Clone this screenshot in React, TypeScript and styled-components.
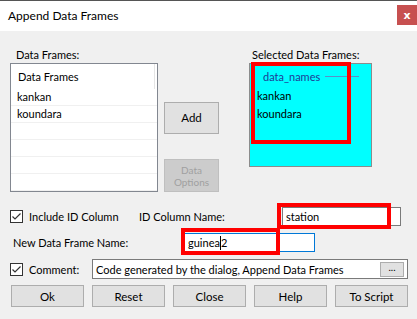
import React, { FC } from "react";
import styled, { createGlobalStyle } from "styled-components";

const GlobalStyle = createGlobalStyle`
  html, body {
    margin: 0;
    padding: 0;
    background: #f0f0f0;
  }
  body {
    font-family: "Segoe UI", Lato, "Noto Sans", sans-serif;
    font-size: 11px;
    color: #000;
  }
`;

const listRows = ["kankan", "koundara", "", "", "", ""];
const bottomButtons = ["Ok", "Reset", "Close", "Help", "To Script"];

const Check: FC<{ checked?: boolean }> = ({ checked }) => (
  <CheckBox>
    {checked && (
      <svg width="11" height="11" viewBox="0 0 11 11">
        <path d="M1.5 5.5 L4 8 L9.5 2.5" fill="none" stroke="#333" strokeWidth="1.2" />
      </svg>
    )}
  </CheckBox>
);

export default function App() {
  return (
    <>
      <GlobalStyle />
      <Window>
        <TitleBar>
          <Title>Append Data Frames</Title>
          <CloseButton>x</CloseButton>
        </TitleBar>
        <Body>
          <TopSection>
            <Column>
              <FieldLabel $indent={6}>Data Frames:</FieldLabel>
              <ListBox>
                <ListHeader>Data Frames</ListHeader>
                {listRows.map((row, i) => (
                  <ListRow key={i}>{row}</ListRow>
                ))}
              </ListBox>
            </Column>
            <MiddleColumn>
              <SideButton>Add</SideButton>
              <SideButton disabled $tall>
                Data
                <br />
                Options
              </SideButton>
            </MiddleColumn>
            <Column>
              <FieldLabel $indent={3}>Selected Data Frames:</FieldLabel>
              <SelectedBox>
                <GroupHeader>
                  <span>data_names</span>
                  <GroupLine />
                </GroupHeader>
                <SelectedItem>kankan</SelectedItem>
                <SelectedItem>koundara</SelectedItem>
                <Highlight $top={-2} $left={1} $width={100} $height={82} />
              </SelectedBox>
            </Column>
          </TopSection>

          <FormRow $top={15}>
            <CheckLabel $width={129}>
              <Check checked />
              Include ID Column
            </CheckLabel>
            <PlainLabel $width={143}>ID Column Name:</PlainLabel>
            <Field>
              <TextBox $width={119}>station</TextBox>
              <Highlight $top={-4} $left={-5} $width={114} $height={26} />
            </Field>
          </FormRow>

          <FormRow $top={7}>
            <PlainLabel $width={174} $indent={3}>
              New Data Frame Name:
            </PlainLabel>
            <Field>
              <TextBox $width={131} $focused>
                guinea<Caret />2
              </TextBox>
              <Highlight $top={-5} $left={-3} $width={99} $height={27} />
            </Field>
          </FormRow>

          <FormRow $top={7}>
            <CheckLabel $width={82}>
              <Check checked />
              Comment:
            </CheckLabel>
            <TextBox $width={316} $height={20}>
              <span>Code generated by the dialog, Append Data Frames</span>
              <DotsButton>...</DotsButton>
            </TextBox>
          </FormRow>

          <ButtonRow>
            {bottomButtons.map((b) => (
              <DialogButton key={b}>{b}</DialogButton>
            ))}
          </ButtonRow>
        </Body>
      </Window>
    </>
  );
}

const Window = styled.div`
  width: 417px;
  height: 319px;
  background: #f0f0f0;
  border-top: 1px solid #555;
  box-sizing: border-box;
  overflow: hidden;
`;

const TitleBar = styled.div`
  height: 30px;
  background: #fff;
  display: flex;
  align-items: center;
  justify-content: space-between;
  padding-left: 8px;
`;

const Title = styled.div`
  font-size: 12px;
  margin-top: -1px;
`;

const CloseButton = styled.div`
  width: 20px;
  height: 20px;
  margin-top: -2px;
  background: #c75050;
  color: #fff;
  font-weight: bold;
  font-size: 11px;
  display: flex;
  align-items: center;
  justify-content: center;
  font-family: "DejaVu Sans", sans-serif;
`;

const Body = styled.div`
  padding: 15px 0 0 10px;
`;

const TopSection = styled.div`
  display: flex;
  align-items: flex-start;
`;

const Column = styled.div`
  display: flex;
  flex-direction: column;
`;

const FieldLabel = styled.div<{ $indent?: number }>`
  height: 17px;
  line-height: 17px;
  padding-left: ${(p) => p.$indent ?? 0}px;
`;

const ListBox = styled.div`
  width: 148px;
  height: 129px;
  box-sizing: border-box;
  border: 1px solid #828790;
  background: #fff;
  position: relative;
`;

const ListHeader = styled.div`
  height: 25px;
  line-height: 25px;
  padding-left: 7px;
  border-right: 1px solid #e5e5e5;
  margin-right: 2px;
`;

const ListRow = styled.div`
  height: 17px;
  box-sizing: border-box;
  line-height: 15px;
  padding-left: 6px;
  border-bottom: 1px solid #f0f0f0;
`;

const MiddleColumn = styled.div`
  display: flex;
  flex-direction: column;
  gap: 25px;
  margin: 56px 30px 0 6px;
`;

const SideButton = styled.button<{ $tall?: boolean }>`
  width: 55px;
  height: ${(p) => (p.$tall ? 33 : 32)}px;
  padding: 0;
  font-family: inherit;
  font-size: ${(p) => (p.$tall ? 10 : 11.5)}px;
  line-height: ${(p) => (p.$tall ? 12 : 14)}px;
  background: #e1e1e1;
  border: 1px solid #adadad;
  color: #000;
  &:disabled {
    background: #cccccc;
    border-color: #bfbfbf;
    color: #a0a0a0;
  }
`;

const SelectedBox = styled.div`
  width: 123px;
  height: 104px;
  box-sizing: border-box;
  border: 1px solid #8c8c8c;
  background: #00ffff;
  position: relative;
  padding: 3px 0 0 7px;
`;

const GroupHeader = styled.div`
  display: flex;
  align-items: center;
  height: 19px;
  padding-left: 6px;
  color: #1e3c96;
  gap: 5px;
`;

const GroupLine = styled.div`
  flex: 1;
  height: 1px;
  margin-right: 12px;
  background: #5a8fc8;
`;

const SelectedItem = styled.div`
  height: 17px;
  line-height: 17px;
  color: #000;
  padding-top: 1px;
`;

const Highlight = styled.div<{ $top: number; $left: number; $width: number; $height: number }>`
  position: absolute;
  top: ${(p) => p.$top}px;
  left: ${(p) => p.$left}px;
  width: ${(p) => p.$width}px;
  height: ${(p) => p.$height}px;
  box-sizing: border-box;
  border: 4px solid #ff0000;
  pointer-events: none;
`;

const FormRow = styled.div<{ $top: number }>`
  display: flex;
  align-items: center;
  margin-top: ${(p) => p.$top}px;
`;

const CheckLabel = styled.label<{ $width: number }>`
  width: ${(p) => p.$width}px;
  display: flex;
  align-items: center;
  gap: 6px;
`;

const CheckBox = styled.span`
  width: 13px;
  height: 13px;
  box-sizing: border-box;
  border: 1px solid #333;
  background: #fff;
  display: inline-flex;
  align-items: center;
  justify-content: center;
`;

const PlainLabel = styled.div<{ $width: number; $indent?: number }>`
  width: ${(p) => p.$width}px;
  padding-left: ${(p) => p.$indent ?? 0}px;
  box-sizing: border-box;
`;

const Field = styled.div`
  position: relative;
`;

const TextBox = styled.div<{ $width: number; $height?: number; $focused?: boolean }>`
  width: ${(p) => p.$width}px;
  height: ${(p) => p.$height ?? 19}px;
  box-sizing: border-box;
  border: 1px solid ${(p) => (p.$focused ? "#0078d7" : "#7a7a7a")};
  background: #fff;
  display: flex;
  align-items: center;
  padding-left: 3px;
  & > span {
    flex: 1;
    white-space: nowrap;
  }
`;

const Caret = styled.span`
  display: inline-block;
  width: 1px;
  height: 14px;
  background: #000;
  flex: none !important;
`;

const DotsButton = styled.div`
  width: 22px;
  height: 13px;
  margin-right: 3px;
  background: #e1e1e1;
  border: 1px solid #adadad;
  font-size: 10px;
  line-height: 9px;
  text-align: center;
`;

const ButtonRow = styled.div`
  display: flex;
  gap: 8px;
  margin-top: 6px;
  padding-left: 1px;
`;

const DialogButton = styled.button`
  width: 73px;
  height: 22px;
  padding: 0;
  font-family: inherit;
  font-size: 11.5px;
  background: #e1e1e1;
  border: 1px solid #adadad;
  color: #000;
`;
